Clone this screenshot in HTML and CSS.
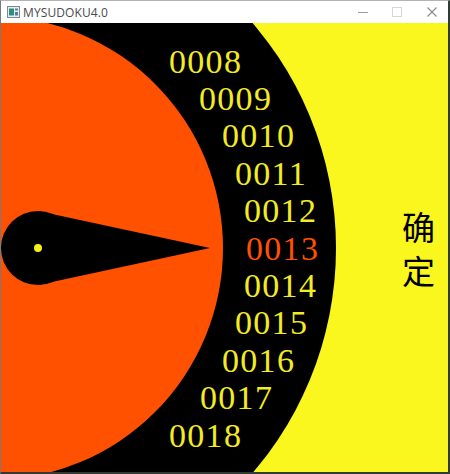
FILE: index.html
```html
<!DOCTYPE html>
<html>
<head>
<meta charset="utf-8">
<title>MYSUDOKU4.0</title>
<link rel="stylesheet" href="styles.css">
</head>
<body>
<div class="window">
  <div class="titlebar">
    <svg class="app-icon" width="13" height="12" viewBox="0 0 13 12">
      <rect x="0.5" y="0.5" width="12" height="11" fill="#e8eef0" stroke="#7c8a90"/>
      <rect x="2" y="2.5" width="5" height="7" fill="#2f8f7f"/>
      <rect x="8" y="2.5" width="3" height="2" fill="#6b7f88"/>
      <rect x="8" y="6" width="3" height="3.5" fill="#4d7fa0"/>
    </svg>
    <span class="title">MYSUDOKU4.0</span>
    <div class="caption-buttons">
      <div class="cbtn cbtn-min"><span class="min-line"></span></div>
      <div class="cbtn cbtn-max"><span class="max-box"></span></div>
      <div class="cbtn cbtn-close">
        <svg width="10" height="10" viewBox="0 0 10 10"><path d="M0.5 0.5 L9.5 9.5 M9.5 0.5 L0.5 9.5" stroke="#8a8a8a" stroke-width="1.1"/></svg>
      </div>
    </div>
  </div>
  <div class="canvas">
    <svg class="dial" width="447" height="449" viewBox="0 0 447 449">
      <circle cx="-10" cy="225" r="345" fill="#000"/>
      <circle cx="-10" cy="225" r="232" fill="#ff5100"/>
      <circle cx="37" cy="225" r="37" fill="#000"/>
      <polygon points="37,188 37,262 209,225" fill="#000"/>
      <circle cx="37" cy="225" r="4" fill="#f5f019"/>
    </svg>
    <div class="numbers">
      <div class="num" style="margin-left:168px">0008</div>
      <div class="num" style="margin-left:198px">0009</div>
      <div class="num" style="margin-left:221px">0010</div>
      <div class="num" style="margin-left:234px">0011</div>
      <div class="num" style="margin-left:243px">0012</div>
      <div class="num num-current" style="margin-left:245px">0013</div>
      <div class="num" style="margin-left:243px">0014</div>
      <div class="num" style="margin-left:234px">0015</div>
      <div class="num" style="margin-left:221px">0016</div>
      <div class="num" style="margin-left:199px">0017</div>
      <div class="num" style="margin-left:168px">0018</div>
    </div>
    <div class="confirm"><span>确</span><span>定</span></div>
  </div>
</div>
</body>
</html>
```
FILE: styles.css
```css
html, body {
  margin: 0;
  padding: 0;
  background: #ffffff;
}
.window {
  width: 450px;
  height: 474px;
  box-sizing: border-box;
  border-top: 1px solid #b4b4b4;
  border-left: 1px solid #7a7a7a;
  border-right: 2px solid #2f3b34;
  border-bottom: 2px solid #2f3b34;
  display: flex;
  flex-direction: column;
  overflow: hidden;
}
.titlebar {
  height: 22px;
  flex: none;
  display: flex;
  align-items: center;
  background: #ffffff;
  font-family: "Open Sans", "Noto Sans", sans-serif;
  font-size: 12px;
  color: #4a4a4a;
}
.app-icon {
  margin-left: 6px;
  margin-top: -1px;
}
.title {
  margin-left: 3px;
  letter-spacing: 0.1px;
}
.caption-buttons {
  margin-left: auto;
  display: flex;
  height: 22px;
}
.cbtn {
  display: flex;
  align-items: center;
  justify-content: center;
  height: 22px;
}
.cbtn-min { width: 31px; }
.cbtn-max { width: 38px; }
.cbtn-close { width: 32px; }
.min-line {
  width: 10px;
  height: 1px;
  background: #9a9a9a;
  margin-top: 1px;
}
.max-box {
  width: 8px;
  height: 8px;
  border: 1px solid #d6d6d6;
}
.canvas {
  position: relative;
  flex: 1;
  background: #f9f71d;
  overflow: hidden;
}
.dial {
  position: absolute;
  left: 0;
  top: 0;
  display: block;
}
.numbers {
  position: absolute;
  left: 0;
  top: 19.6px;
  display: flex;
  flex-direction: column;
  font-family: "Liberation Serif", "Times New Roman", serif;
  font-size: 34px;
  line-height: 37.4px;
  letter-spacing: 1.3px;
  color: #f4ec22;
}
.num {
  white-space: nowrap;
  height: 37.4px;
}
.num-current {
  color: #ff5100;
}
.confirm {
  position: absolute;
  left: 401px;
  top: 181px;
  display: flex;
  flex-direction: column;
  font-family: "Noto Sans CJK SC", sans-serif;
  font-size: 33px;
  line-height: 44px;
  color: #000;
}
```
